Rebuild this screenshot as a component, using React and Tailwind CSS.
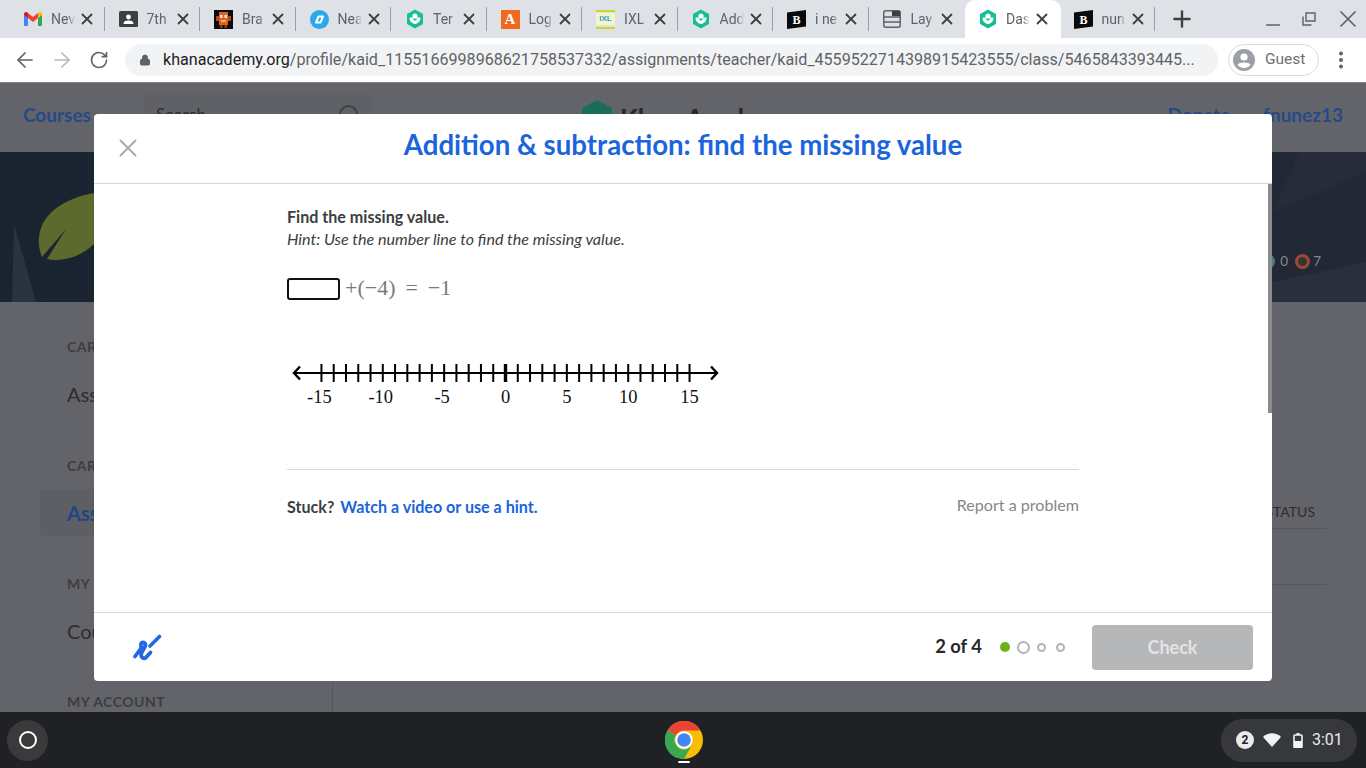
import { X, ArrowLeft, ArrowRight, RotateCw, Lock, Plus, Minus, MoreVertical } from "lucide-react";

function KhanIcon() {
  return (
    <svg width="18" height="20" viewBox="0 0 18 20">
      <path d="M9 0.5 L17 5 V15 L9 19.5 L1 15 V5 Z" fill="#14bf96" />
      <path d="M3.5 8.5 C3.5 12.5 6 14.5 9 15 C12 14.5 14.5 12.5 14.5 8.5 Z" fill="#fff" />
      <circle cx="9" cy="7" r="2.6" fill="#fff" />
      <path d="M6.5 9.6 L9 12 L11.5 9.6 Z" fill="#14bf96" />
    </svg>
  );
}

function GmailIcon() {
  return (
    <svg width="18" height="14" viewBox="0 0 18 14">
      <path d="M0 2 V13 a1 1 0 0 0 1 1 H4 V6 Z" fill="#4285f4" />
      <path d="M18 2 V13 a1 1 0 0 1 -1 1 H14 V6 Z" fill="#34a853" />
      <path d="M14 1 L14 6 L18 3 V2 C18 0.3 16 -0.5 14.8 0.4 Z" fill="#fbbc04" />
      <path d="M4 6 V1 L9 5 L14 1 V6 L9 10 Z" fill="#ea4335" />
      <path d="M0 2 V3 L4 6 V1 L3.2 0.4 C2 -0.5 0 0.3 0 2 Z" fill="#c5221f" />
    </svg>
  );
}

function ClassroomIcon() {
  return (
    <svg width="19" height="16" viewBox="0 0 19 16">
      <rect width="19" height="16" rx="1.5" fill="#3c4043" />
      <circle cx="9.5" cy="6" r="2.4" fill="#fff" />
      <path d="M4.5 13 C4.5 10 7 9.5 9.5 9.5 C12 9.5 14.5 10 14.5 13 Z" fill="#fff" />
    </svg>
  );
}

function BrainIcon() {
  return (
    <svg width="19" height="19" viewBox="0 0 19 19">
      <rect width="19" height="19" fill="#0b0b0b" />
      <rect x="5" y="2" width="9" height="13" fill="#d9622b" />
      <rect x="2" y="6" width="3" height="5" fill="#b8481c" />
      <rect x="14" y="6" width="3" height="5" fill="#b8481c" />
      <rect x="6" y="5" width="2.5" height="3" fill="#f7e3c0" />
      <rect x="10.5" y="5" width="2.5" height="3" fill="#f7e3c0" />
      <rect x="7" y="10" width="5" height="2" fill="#f2b33d" />
      <rect x="6" y="15" width="2.5" height="3" fill="#8f3a18" />
      <rect x="10.5" y="15" width="2.5" height="3" fill="#8f3a18" />
    </svg>
  );
}

function NearpodIcon() {
  return (
    <svg width="19" height="19" viewBox="0 0 19 19">
      <circle cx="9.5" cy="9.5" r="9.5" fill="#29a9eb" />
      <path d="M6 12.5 L8.5 6.5 H13 L10.5 12.5 Z" fill="none" stroke="#fff" strokeWidth="2" strokeLinejoin="round" />
    </svg>
  );
}

function LogIcon() {
  return (
    <div className="w-[19px] h-[19px] bg-[#ee6a1f] flex items-center justify-center text-white font-bold text-[15px] leading-none font-['Liberation_Serif',serif]">
      A
    </div>
  );
}

function IxlIcon() {
  return (
    <div className="w-[19px] h-[19px] flex flex-col justify-between">
      <div className="h-[2px] bg-[#c5d92d]" />
      <div className="text-[8px] leading-none font-bold text-center text-[#2a9fd6] bg-[#f4f6c8] py-[2px] font-['Liberation_Sans',sans-serif]">
        IXL
      </div>
      <div className="h-[2px] bg-[#c5d92d]" />
    </div>
  );
}

function BrainlyIcon() {
  return (
    <svg width="19" height="19" viewBox="0 0 19 19">
      <path d="M0 2.5 L19 0 V16.5 L0 19 Z" fill="#0a0a0a" />
      <text x="9.5" y="14" textAnchor="middle" fontSize="12" fontWeight="700" fill="#fff" fontFamily="Liberation Serif, serif">
        B
      </text>
    </svg>
  );
}

function LayoutIcon() {
  return (
    <svg width="18" height="18" viewBox="0 0 18 18" fill="none">
      <rect x="0.75" y="0.75" width="16.5" height="16.5" rx="2" stroke="#5f6368" strokeWidth="1.5" />
      <path d="M1 7 H17 M1 12 H17" stroke="#5f6368" strokeWidth="1.5" />
      <rect x="9" y="1" width="8" height="5" fill="#3c4043" />
    </svg>
  );
}

const tabs = [
  { icon: <GmailIcon />, title: "Nev" },
  { icon: <ClassroomIcon />, title: "7th" },
  { icon: <BrainIcon />, title: "Bra" },
  { icon: <NearpodIcon />, title: "Nea" },
  { icon: <KhanIcon />, title: "Ter" },
  { icon: <LogIcon />, title: "Log" },
  { icon: <IxlIcon />, title: "IXL" },
  { icon: <KhanIcon />, title: "Add" },
  { icon: <BrainlyIcon />, title: "i ne" },
  { icon: <LayoutIcon />, title: "Lay" },
  { icon: <KhanIcon />, title: "Das", active: true },
  { icon: <BrainlyIcon />, title: "nun" },
];

function Tab({ icon, title, active, hideSep }) {
  return (
    <div
      className={
        "w-[95.5px] h-[38px] shrink-0 flex items-center pl-[13px] " +
        (active ? "bg-white rounded-t-[10px]" : "")
      }
    >
      <div className="w-[19px] flex justify-center shrink-0">{icon}</div>
      <div className="ml-[9px] w-[24px] overflow-hidden whitespace-nowrap text-[14px] text-[#5f6368] [mask-image:linear-gradient(to_right,black_70%,transparent)]">
        {title}
      </div>
      <X className="ml-[3px] shrink-0 text-[#3c4043]" size={18} strokeWidth={2.4} />
      <div className={"ml-auto mr-[1px] w-px h-[24px] " + (active || hideSep ? "" : "bg-[#9aa0a6]")} />
    </div>
  );
}

function NumberLine() {
  const ticks = [];
  for (let i = -15; i <= 15; i++) ticks.push(i);
  const labels = [-15, -10, -5, 0, 5, 10, 15];
  const xOf = (n) => 215.5 + n * 12.27;
  return (
    <svg width="440" height="50" viewBox="0 0 440 50" className="block">
      <line x1="4" y1="15" x2="427" y2="15" stroke="#000" strokeWidth="2" />
      <path d="M10 8.5 L4 15 L10 21.5" fill="none" stroke="#000" strokeWidth="2.4" />
      <path d="M421 8.5 L427 15 L421 21.5" fill="none" stroke="#000" strokeWidth="2.4" />
      {ticks.map((n) => (
        <line
          key={n}
          x1={xOf(n)}
          y1="6"
          x2={xOf(n)}
          y2="24"
          stroke="#000"
          strokeWidth={n === 0 ? 3.4 : 2}
        />
      ))}
      {labels.map((n) => (
        <text
          key={n}
          x={xOf(n) - (n < 0 ? 2 : 0)}
          y="45"
          textAnchor="middle"
          fontSize="18.5"
          fill="#111"
          fontFamily="Liberation Serif, serif"
        >
          {n}
        </text>
      ))}
    </svg>
  );
}

function Scribble() {
  return (
    <svg width="30" height="30" viewBox="0 0 30 30" fill="none" stroke="#2567e0" strokeLinecap="round" strokeLinejoin="round">
      <path
        d="M3 24.5 L8.5 17 C10.5 14 7.5 12.5 9.5 11 C11.5 9.5 14.5 11.5 13 14.5 L9.5 21 C8 25 11.5 27.5 14 25.5 L18.5 20.5"
        strokeWidth="3.8"
      />
      <path d="M18 14 L27.5 4.5" strokeWidth="3.6" />
    </svg>
  );
}

function ChromeLogo() {
  return (
    <svg width="38" height="38" viewBox="0 0 48 48">
      <circle cx="24" cy="24" r="24" fill="#fbbc04" />
      <path d="M24 0 A24 24 0 0 1 44.8 12 H24 A12 12 0 0 0 13.6 18 L3.2 12 A24 24 0 0 1 24 0 Z" fill="#ea4335" />
      <path d="M3.2 12 L13.6 18 A12 12 0 0 0 24 36 L13.6 46 A24 24 0 0 1 3.2 12 Z" fill="#34a853" />
      <path d="M13.6 46 L24 36 A12 12 0 0 0 34.4 30 L24 48 Z" fill="#34a853" />
      <circle cx="24" cy="24" r="11" fill="#fff" />
      <circle cx="24" cy="24" r="8.6" fill="#4285f4" />
    </svg>
  );
}

function SideItem({ label, item, active }) {
  return (
    <div>
      <div className="ml-[67px] text-[14px] font-bold tracking-[0.5px] text-[#3c3d42] leading-[18px]">{label}</div>
      {item && (
        <div
          className={
            "mt-[14px] ml-[40px] pl-[27px] h-[47px] flex items-center text-[20px] rounded-l-[4px] " +
            (active ? "bg-[#5d5f65] text-[#1f4587] font-bold" : "text-[#2c2d31]")
          }
        >
          {item}
        </div>
      )}
    </div>
  );
}

export default function App() {
  return (
    <div className="relative h-[768px] w-[1366px] overflow-hidden flex flex-col bg-[#636469] font-['Roboto',sans-serif]">
      {/* tab strip */}
      <div className="h-[38px] shrink-0 bg-[#dee1e6] flex items-center pl-[10px]">
        {tabs.map((t, i) => (
          <Tab key={i} {...t} hideSep={i === 9} />
        ))}
        <Plus className="ml-[13px] text-[#3c4043]" size={26} strokeWidth={2.2} />
        <div className="ml-auto flex items-center pr-[4px] gap-[14px] text-[#5f6368]">
          <Minus size={22} strokeWidth={1.7} className="mt-[12px]" />
          <svg width="14" height="14" viewBox="0 0 14 14" fill="none" stroke="#5f6368" strokeWidth="1.4" className="mx-[4px]">
            <path d="M4 1 H13 V9 H4 Z" />
            <path d="M1 4.5 V13 H9.5" />
          </svg>
          <X size={28} strokeWidth={1.5} />
        </div>
      </div>

      {/* toolbar */}
      <div className="h-[44px] shrink-0 bg-white flex items-center pl-[13px] pr-[13px]">
        <ArrowLeft size={24} className="text-[#5f6368]" strokeWidth={1.7} />
        <ArrowRight size={24} className="ml-[13px] text-[#b6b9bd]" strokeWidth={1.7} />
        <RotateCw size={20} className="ml-[15px] text-[#5f6368]" strokeWidth={2} />
        <div className="ml-[16px] w-[1093px] h-[32px] rounded-full bg-[#f1f3f4] flex items-center pl-[14px] shrink-0">
          <Lock size={12} fill="#5f6368" className="text-[#5f6368]" />
          <div className="ml-[12px] text-[16.1px] whitespace-nowrap text-[#5f6368]">
            <span className="text-[#202124]">khanacademy.org</span>
            /profile/kaid_1155166998968621758537332/assignments/teacher/kaid_4559522714398915423555/class/5465843393445...
          </div>
        </div>
        <div className="ml-[10px] w-[91px] h-[32px] rounded-full border border-[#dadce0] flex items-center pl-[4px] shrink-0">
          <svg width="22" height="22" viewBox="0 0 22 22">
            <circle cx="11" cy="11" r="11" fill="#9aa0a6" />
            <circle cx="11" cy="8" r="3.6" fill="#fff" />
            <path d="M4.5 16 C6 12.8 16 12.8 17.5 16 C16 18 13.5 19 11 19 C8.5 19 6 18 4.5 16 Z" fill="#fff" />
          </svg>
          <span className="ml-[10px] text-[15.5px] text-[#6d7175]">Guest</span>
        </div>
        <MoreVertical size={22} className="ml-[11px] text-[#5f6368]" strokeWidth={2.4} />
      </div>

      {/* dimmed page behind the dialog */}
      <div className="flex-1 min-h-0 flex flex-col bg-[#636469] font-['Lato',sans-serif] border-t border-[#87888b] overflow-hidden">
        <div className="h-[69px] shrink-0 flex items-center pl-[23px] pr-[23px] pb-[4px] text-[19px] font-bold text-[#264a87]">
          <span>Courses</span>
          <div className="ml-[53px] mb-[2px] w-[229px] h-[42px] bg-[#606166] flex items-center px-[12px] font-normal text-[#2c2d31] text-[17px]">
            <span>Search</span>
            <div className="ml-auto mr-[3px] w-[19px] h-[19px] rounded-full border-2 border-[#3f4045]" />
          </div>
          <svg className="ml-[209px]" width="30" height="32" viewBox="0 0 30 32">
            <path d="M15 0 L30 8 V24 L15 32 L0 24 V8 Z" fill="#1a6d57" />
          </svg>
          <div className="ml-[8px] text-[26px] text-[#25272b] whitespace-nowrap mt-[6px]">Khan Academy</div>
          <div className="ml-auto">Donate</div>
          <div className="ml-[33px]">fnunez13</div>
        </div>

        <div className="relative h-[150px] shrink-0 bg-linear-to-r from-[#1a2431] to-[#222835] overflow-hidden flex items-center justify-end">
          <svg className="absolute left-0 top-0" width="1366" height="150" viewBox="0 0 1366 150">
            <path d="M14 72 L36 150 H12 Z" fill="#283240" />
            <path d="M1272 60 L1366 20 V0 H1300 Z" fill="#272c38" />
            <path d="M1272 130 L1366 110 V150 H1272 Z" fill="#292f3c" />
            <path d="M94 41 C66 46 42 60 39 85 C38 92 40 100 42 105 L66 77 L47 107 C60 110 80 106 94 92 Z" fill="#5c6a2e" />
          </svg>
          <div className="relative mr-[45px] mt-[68px] flex items-center text-[13.5px] text-[#85888d]">
            <span className="mr-[5px] w-[15px] h-[15px] rounded-full bg-[#4a7c7a]" />
            <span>0</span>
            <span className="ml-[7px] w-[15px] h-[15px] rounded-full bg-[#2f3a2d] border-[3px] border-[#a3443c]" />
            <span className="ml-[3px]">7</span>
          </div>
        </div>

        <div className="flex flex-1 min-h-0">
          <div className="w-[333px] shrink-0 border-r border-[#57585d] pt-[36px] flex flex-col">
            <SideItem label="CAREER" item="Assignments" />
            <div className="mt-[40px]" />
            <SideItem label="CAREER" item="Assignments" active />
            <div className="mt-[39px]" />
            <SideItem label="MY STUFF" item="Courses" />
            <div className="mt-[39px]" />
            <SideItem label="MY ACCOUNT" />
          </div>
          <div className="flex-1 pr-[40px] pt-[198px]">
            <div className="h-[29px] flex items-center justify-end pr-[11px] pb-[6px] text-[14px] text-[#2c2d31] border-b border-[#56575c] mb-[55px]">
              STATUS
            </div>
            <div className="border-b border-[#56575c]" />
          </div>
        </div>
      </div>

      {/* shelf */}
      <div className="h-[56px] shrink-0 bg-[#202124] flex items-center pl-[7px] pr-[9px] relative">
        <div className="w-[41px] h-[41px] rounded-full bg-[#3a3a3d] flex items-center justify-center">
          <div className="w-[18px] h-[18px] rounded-full border-2 border-white" />
        </div>
        <div className="ml-[617px] flex flex-col items-center mt-[4px]">
          <ChromeLogo />
          <div className="w-[12px] h-[2px] mt-[2px] bg-white rounded" />
        </div>
        <div className="ml-auto w-[136px] h-[43px] rounded-full bg-[#37383b] flex items-center pl-[15px] text-white">
          <div className="w-[18px] h-[18px] rounded-full bg-[#e8eaed] text-[#202124] text-[12px] font-bold flex items-center justify-center">
            2
          </div>
          <svg className="ml-[9px]" width="18" height="14" viewBox="0 0 18 14">
            <path d="M0 4 C5 -1 13 -1 18 4 L9 14 Z" fill="#f1f3f4" />
          </svg>
          <svg className="ml-[12px]" width="10" height="15" viewBox="0 0 10 15" fill="none">
            <rect x="3.5" y="0" width="3" height="2" fill="#f1f3f4" />
            <rect x="1" y="2" width="8" height="12.5" rx="1" stroke="#f1f3f4" strokeWidth="1.6" />
            <rect x="1" y="8" width="8" height="6.5" fill="#f1f3f4" />
          </svg>
          <span className="ml-[9px] text-[16px] text-[#e8eaed]">3:01</span>
        </div>
      </div>

      {/* exercise dialog */}
      <div className="absolute left-[94px] top-[114px] w-[1178px] h-[567px] bg-white rounded-[4px] flex flex-col font-['Lato',sans-serif]">
        <div className="h-[70px] shrink-0 border-b border-[#d6d8da] flex items-center relative">
          <X className="absolute left-[19px] top-[19px] text-[#a9abae]" size={30} strokeWidth={1.5} />
          <h1 className="w-full text-center text-[27.6px] font-bold text-[#1a64dc] leading-none pb-[8px]">
            Addition &amp; subtraction: find the missing value
          </h1>
        </div>

        <div className="relative flex-1 min-h-0 pl-[193px] pr-[193px] pt-[23px]">
          <div className="absolute right-0 top-0 w-[4px] h-[229px] bg-[#8a8b8e]" />
          <p className="text-[16.1px] font-bold leading-[20px] text-[#3b3e40]">Find the missing value.</p>
          <p className="text-[16.1px] italic leading-[20px] mt-[2px] text-[#3b3e40]">
            Hint: Use the number line to find the missing value.
          </p>
          <div className="mt-[28px] flex items-center h-[24px]">
            <div className="w-[53px] h-[22px] rounded-[3px] border-2 border-[#111]" />
            <span className="ml-[5px] mb-[3px] text-[22px] font-['Liberation_Serif',serif] text-[#77797c] [word-spacing:4.5px]">
              +(−4) = −1
            </span>
          </div>
          <div className="mt-[57px] ml-[3px]">
            <NumberLine />
          </div>
          <div className="mt-[61px] border-t border-[#d6d8da]" />
          <div className="mt-[23px] flex items-center justify-between">
            <div className="text-[16.1px] leading-[22px] font-bold">
              <span className="text-[#3b3e40]">Stuck?</span>
              <span className="ml-[6px] text-[#1a64dc]">Watch a video or use a hint.</span>
            </div>
            <div className="text-[16.1px] text-[#85878a] mb-[4px]">Report a problem</div>
          </div>
        </div>

        <div className="h-[69px] shrink-0 border-t border-[#d6d8da] flex items-center pl-[38px] pr-[19px]">
          <Scribble />
          <span className="ml-auto text-[18.4px] font-bold text-[#26282a]">2 of 4</span>
          <div className="ml-[18px] w-[10px] h-[10px] rounded-full bg-[#6db01a]" />
          <div className="ml-[7px] w-[13px] h-[13px] rounded-full border-2 border-[#b2b4b6]" />
          <div className="ml-[7px] w-[9px] h-[9px] rounded-full border-2 border-[#b2b4b6]" />
          <div className="ml-[10px] w-[9px] h-[9px] rounded-full border-2 border-[#b2b4b6]" />
          <div className="ml-[27px] w-[161px] h-[45px] rounded-[4px] bg-[#b6b7b9] flex items-center justify-center text-[18px] font-bold text-[#e3e4e5]">
            Check
          </div>
        </div>
      </div>
    </div>
  );
}
